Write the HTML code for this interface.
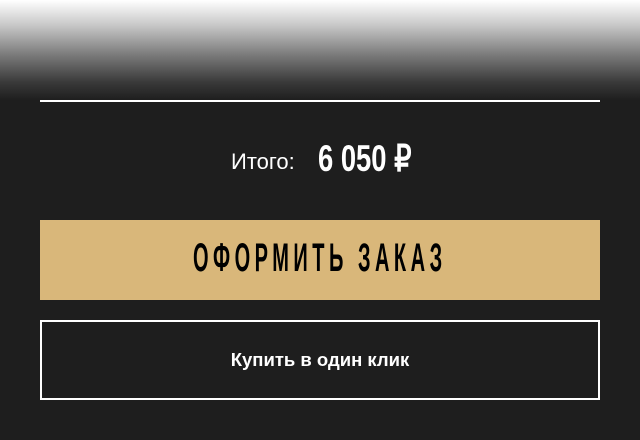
<!DOCTYPE html><html><head><meta charset="utf-8"><style>
body{margin:0;width:640px;height:440px;background:#1e1e1e;position:relative;overflow:hidden;font-family:"Liberation Sans",sans-serif;color:#fff}
.g{position:absolute;left:0;top:0;width:640px;height:100px;background:linear-gradient(#fff 0%,#c8c8c8 25%,#7a7a7a 55%,#3a3a3a 82%,#1e1e1e 100%)}
.line{position:absolute;left:40px;top:100px;width:560px;height:2px;background:#fff}
.it{position:absolute;left:231px;top:149px;font-size:22px}
.pr{position:absolute;left:318px;top:137px;font-size:37px;font-weight:bold;transform:scaleX(.74);transform-origin:left top;white-space:nowrap}
.btn{position:absolute;left:40px;top:220px;width:560px;height:80px;background:#d9b77a}
.bt{position:absolute;left:193px;top:236px;font-size:40px;font-weight:bold;color:#000;letter-spacing:9px;white-space:nowrap;transform:scaleX(.5);transform-origin:left top}
.b2{position:absolute;left:40px;top:320px;width:556px;height:76px;border:2px solid #fff;text-align:center;line-height:76px;font-size:18.5px;font-weight:bold}
</style></head><body>
<div class="g"></div><div class="line"></div>
<div class="it">Итого:</div>
<div class="pr">6 050 ₽</div>
<div class="btn"></div><div class="bt">ОФОРМИТЬ ЗАКАЗ</div>
<div class="b2">Купить в один клик</div>
</body></html>
